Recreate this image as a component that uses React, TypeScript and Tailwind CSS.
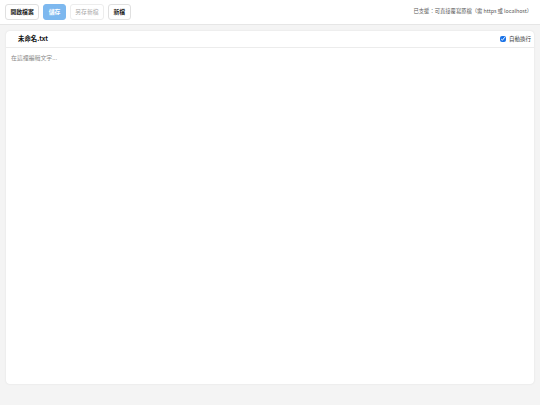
import { useState } from "react";

const font = "font-['Noto_Sans_CJK_TC','Noto_Sans',sans-serif]";

export default function App() {
  const [text, setText] = useState("");
  const [wrap, setWrap] = useState(true);

  return <div className={`h-[405px] bg-[#f4f4f4] flex flex-col ${font}`}>
      {/* Toolbar */}
      <div className="h-[25px] shrink-0 bg-white border-b border-[#e6e6e6] px-[5px] flex items-center justify-between">
        <div className="flex items-center gap-[4px]">
          <button className="h-[16px] px-[4.5px] rounded-[3px] border border-[#e0e0e0] bg-white text-[5.8px] font-semibold text-[#222]">
            開啟檔案
          </button>
          <button className="h-[16px] px-[4.5px] rounded-[3px] border border-[#7db8ef] bg-[#7db8ef] text-[5.8px] font-semibold text-white">
            儲存
          </button>
          <button className="h-[16px] px-[4.5px] rounded-[3px] border border-[#ededed] bg-white text-[5.8px] text-[#a8a8a8]">
            另存新檔
          </button>
          <button className="h-[16px] px-[4.5px] rounded-[3px] border border-[#e0e0e0] bg-white text-[5.8px] font-semibold text-[#222]">
            新檔
          </button>
        </div>
        <span className="text-[5.3px] text-[#555] pr-[3px]">
          已支援：可直接覆寫原檔（需 https 或 localhost）
        </span>
      </div>

      {/* Editor card */}
      <div className="mx-[6px] mt-[6px] h-[353px] bg-white rounded-[4px] shadow-[0_0_2px_rgba(0,0,0,0.1)] flex flex-col overflow-hidden">
        <div className="h-[17px] shrink-0 border-b border-[#ececec] pl-[12px] pr-[3px] flex items-center justify-between">
          <span className="text-[6.4px] font-bold text-[#111]">未命名.txt</span>
          <label className="flex items-center gap-[3px] text-[5.5px] text-[#333]">
            <input type="checkbox" checked={wrap} onChange={e => setWrap(e.target.checked)} className="w-[6px] h-[6px] accent-[#1a73e8]" />
            自動換行
          </label>
        </div>
        <textarea value={text} onChange={e => setText(e.target.value)} placeholder="在這裡編輯文字..." wrap={wrap ? "soft" : "off"} className="flex-1 resize-none outline-none px-[5px] py-[6px] text-[5.9px] leading-[1.5] text-[#222] placeholder:text-[#8a8a8a]" />
      </div>
    </div>;
}
